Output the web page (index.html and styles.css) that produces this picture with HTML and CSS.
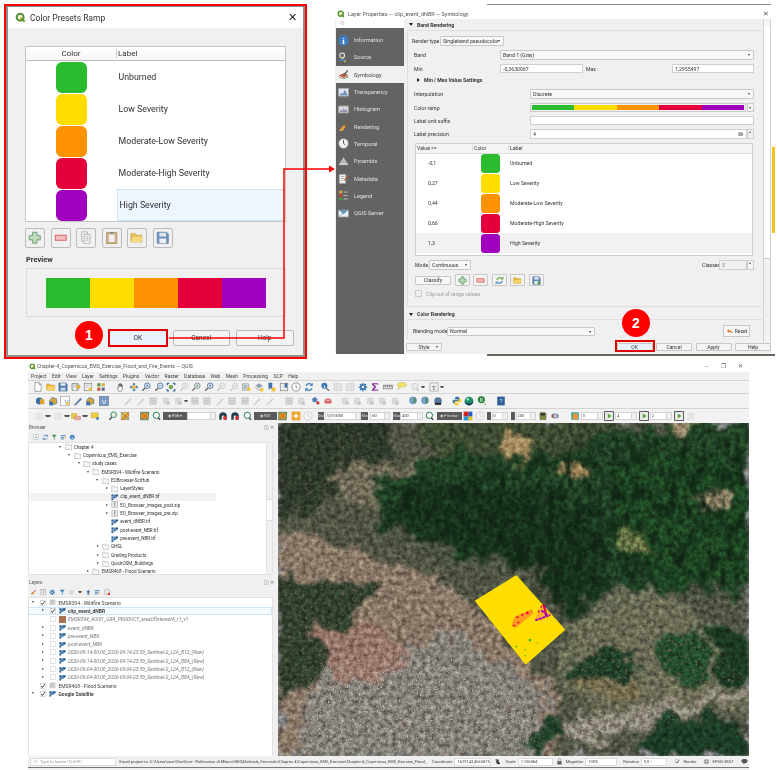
FILE: index.html
```html
<!DOCTYPE html>
<html lang="en">
<head>
<meta charset="utf-8">
<title>QGIS Color Presets Ramp</title>
<link rel="stylesheet" href="styles.css">
</head>
<body>
<svg class="defs" width="0" height="0" aria-hidden="true">
  <defs>
    <symbol id="q" viewBox="0 0 16 16"><circle cx="7.5" cy="7.5" r="5" fill="none" stroke="#589632" stroke-width="3"/><path d="M9 9l5 5" stroke="#589632" stroke-width="3"/><circle cx="8.5" cy="8.5" r="1.6" fill="#eeb422"/></symbol>
    <symbol id="doc" viewBox="0 0 16 16"><path d="M3 1h7l3 3v11H3z" fill="#fff" stroke="#777"/><path d="M10 1v3h3" fill="none" stroke="#777"/></symbol>
    <symbol id="fold" viewBox="0 0 16 16"><path d="M1 13V3h5l2 2h6v8z" fill="#e8b93c" stroke="#b78a1e" stroke-width=".7"/><path d="M1 13l2-6h12l-2 6z" fill="#f6d66a"/></symbol>
    <symbol id="save" viewBox="0 0 16 16"><path d="M1.5 1.5h11l2 2v11h-13z" fill="#4f7fb8" stroke="#3a5f8e"/><rect x="4" y="2" width="8" height="4" fill="#e8eef6"/><rect x="4" y="9" width="8" height="5" fill="#c7d4e4"/></symbol>
    <symbol id="saveas" viewBox="0 0 16 16"><path d="M1.5 2.5h10v11h-10z" fill="#cfd6dd" stroke="#777"/><path d="M9 5h5v5H9z" fill="#eec33a" stroke="#a8841c" stroke-width=".7"/><rect x="4" y="9" width="4" height="4" fill="#fff"/></symbol>
    <symbol id="print" viewBox="0 0 16 16"><rect x="2" y="2" width="12" height="12" fill="#f4f4f4" stroke="#777"/><path d="M4 5h8M4 8h5" stroke="#9ab" /><path d="M9 9h5v5H9z" fill="#eec33a"/></symbol>
    <symbol id="lay" viewBox="0 0 16 16"><rect x="2" y="2" width="5" height="5" fill="#5d8f3e"/><rect x="9" y="2" width="5" height="5" fill="#d2b23a"/><rect x="2" y="9" width="5" height="5" fill="#c85a3a"/><rect x="9" y="9" width="5" height="5" fill="#5a6e96"/></symbol>
    <symbol id="hand" viewBox="0 0 16 16"><path d="M4 8V4.5c0-1 1.5-1 1.5 0V7 3c0-1 1.6-1 1.6 0v4-3.500c0-1 1.600-1 1.600 0V8 5c0-1 1.500-1 1.500 0v6c0 2-1.500 4-4 4S3 13 2 10c-.4-1.200 1-1.500 2-.5z" fill="#fff" stroke="#444" stroke-width=".9"/></symbol>
    <symbol id="pan" viewBox="0 0 16 16"><path d="M8 1l3 3H9v3h3V5l3 3-3 3V9H9v3h2l-3 3-3-3h2V9H4v2L1 8l3-3v2h3V4H5z" fill="#4b7bb0"/><circle cx="8" cy="8" r="3" fill="#e8c33a"/></symbol>
    <symbol id="zin" viewBox="0 0 16 16"><circle cx="10" cy="6" r="4.500" fill="#dfe9f4" stroke="#4d6f93" stroke-width="1.400"/><path d="M6.500 9.500L2 14" stroke="#666" stroke-width="2.200"/><path d="M8 6h4M10 4v4" stroke="#3d6ea5"/></symbol>
    <symbol id="zout" viewBox="0 0 16 16"><circle cx="10" cy="6" r="4.500" fill="#dfe9f4" stroke="#4d6f93" stroke-width="1.400"/><path d="M6.500 9.500L2 14" stroke="#666" stroke-width="2.200"/><path d="M8 6h4" stroke="#3d6ea5"/></symbol>
    <symbol id="zfull" viewBox="0 0 16 16"><path d="M1 1h4v2H3v2H1zM15 1h-4v2h2v2h2zM1 15h4v-2H3v-2H1zM15 15h-4v-2h2v-2h2z" fill="#3d6ea5"/><rect x="5" y="5" width="6" height="6" fill="#7aa04a"/></symbol>
    <symbol id="zlay" viewBox="0 0 16 16"><circle cx="10" cy="6" r="4.500" fill="#e9eef3" stroke="#6a8098" stroke-width="1.300"/><path d="M6.500 9.500L2 14" stroke="#777" stroke-width="2"/><rect x="8.500" y="4.500" width="3" height="3" fill="#7aa04a"/></symbol>
    <symbol id="newm" viewBox="0 0 16 16"><rect x="2" y="3" width="10" height="10" fill="#dfe3e6" stroke="#888"/><rect x="4" y="5" width="6" height="6" fill="#aab9c4"/><rect x="10" y="9" width="5" height="5" fill="#efc332"/></symbol>
    <symbol id="tile" viewBox="0 0 16 16"><path d="M8 2l6 4-6 4-6-4z" fill="#8da3b8"/><path d="M2 9l6 4 6-4" fill="none" stroke="#888"/><rect x="10" y="10" width="5" height="5" fill="#efc332"/></symbol>
    <symbol id="bmk" viewBox="0 0 16 16"><path d="M4 1h6v11l-3-2.500L4 12z" fill="#3e6fa8"/><rect x="9" y="9" width="6" height="6" fill="#efc332"/></symbol>
    <symbol id="bms" viewBox="0 0 16 16"><rect x="2" y="2" width="12" height="12" fill="#eee" stroke="#777"/><path d="M9 2h4v8l-2-1.500L9 10z" fill="#3e6fa8"/></symbol>
    <symbol id="clock" viewBox="0 0 16 16"><circle cx="8" cy="8" r="6.500" fill="#fff" stroke="#777" stroke-width="1.200"/><path d="M8 4v4l3 2" fill="none" stroke="#555"/></symbol>
    <symbol id="ref" viewBox="0 0 16 16"><path d="M13 5A6 6 0 0 0 3 6M3 11a6 6 0 0 0 10-1" fill="none" stroke="#3a79b8" stroke-width="2"/><path d="M14 1v5H9zM2 15v-5h5z" fill="#3a79b8"/></symbol>
    <symbol id="iden" viewBox="0 0 16 16"><circle cx="7" cy="6" r="4.800" fill="#3e77b5"/><text x="7" y="9" font-size="8" font-family="Liberation Serif" font-weight="700" fill="#fff" text-anchor="middle">i</text><path d="M10 10l5 4" stroke="#666" stroke-width="2"/></symbol>
    <symbol id="tbl" viewBox="0 0 16 16"><rect x="2" y="3" width="12" height="10" fill="#f6f6f6" stroke="#bbb"/><path d="M2 6h12M2 9h12M6 3v10M10 3v10" stroke="#ccc"/></symbol>
    <symbol id="gear" viewBox="0 0 16 16"><circle cx="8" cy="8" r="3.500" fill="none" stroke="#4179b8" stroke-width="3"/><path d="M8 1v3M8 12v3M1 8h3M12 8h3M3 3l2 2M11 11l2 2M13 3l-2 2M5 11l-2 2" stroke="#4179b8" stroke-width="2"/></symbol>
    <symbol id="sig" viewBox="0 0 16 16"><path d="M3 2h10v3l-1.500-1.500H6.500L10 8l-3.500 4.500H12L13 11v3H3v-1.500L7 8 3 3.500z" fill="#8a2a9c"/></symbol>
    <symbol id="meas" viewBox="0 0 16 16"><rect x="1" y="5" width="14" height="6" fill="#d8d8d8" stroke="#777"/><path d="M4 5v3M7 5v3M10 5v3M13 5v3" stroke="#555"/></symbol>
    <symbol id="tip" viewBox="0 0 16 16"><path d="M1 4c0-2 2-3 7-3s7 1 7 3-2 4-7 4H5l-3 4 1-4.500C2 7 1 6 1 4z" fill="#f4e56a" stroke="#b5a53e" stroke-width=".7"/></symbol>
    <symbol id="gry" viewBox="0 0 16 16"><circle cx="8" cy="7" r="5" fill="#ececec" stroke="#bbb"/><path d="M11 11l3 3" stroke="#bbb" stroke-width="2"/></symbol>
    <symbol id="tbox" viewBox="0 0 16 16"><rect x="1.500" y="1.500" width="13" height="13" fill="#eee" stroke="#999"/><text x="8" y="12" font-size="10" font-family="Liberation Serif" fill="#444" text-anchor="middle">T</text></symbol>
    <symbol id="addv" viewBox="0 0 16 16"><circle cx="7" cy="8" r="5.500" fill="#3d70aa"/><path d="M8 5h7v8H8z" fill="#e3a22e"/></symbol>
    <symbol id="addp" viewBox="0 0 16 16"><path d="M2 8l5-6 7 3v7l-6 2z" fill="#d8a632" stroke="#3d70aa"/><rect x="2" y="9" width="6" height="6" fill="#3d70aa"/></symbol>
    <symbol id="vbox" viewBox="0 0 16 16"><rect x="1" y="1" width="14" height="14" fill="#fff" stroke="#999"/><text x="7" y="12" font-size="10" font-family="Liberation Sans" fill="#4e6d91">V</text><rect x="10" y="10" width="4" height="4" fill="#efc332"/></symbol>
    <symbol id="pen" viewBox="0 0 16 16"><path d="M2 14L12 3l2 2L4 15z" fill="#5b8ab8" stroke="#3e5f80" stroke-width=".5"/><path d="M2 14l1-3 2 2z" fill="#e8a23c"/></symbol>
    <symbol id="vlay" viewBox="0 0 16 16"><rect x="1" y="1" width="14" height="14" fill="#7a9cc4" stroke="#4e6d91"/><text x="8" y="12" font-size="10" font-family="Liberation Sans" fill="#fff" text-anchor="middle">V</text></symbol>
    <symbol id="fad" viewBox="0 0 16 16"><rect x="3" y="3" width="10" height="10" fill="#d6d6d6" stroke="#bbb"/><path d="M5 8h6" stroke="#aaa"/></symbol>
    <symbol id="fad2" viewBox="0 0 16 16"><path d="M2 14L12 3l2 2L4 15z" fill="#d0d0d0"/></symbol>
    <symbol id="fad3" viewBox="0 0 16 16"><path d="M3 4l5-2 5 2v8l-5 2-5-2z" fill="#d8d8d8"/><rect x="9" y="9" width="5" height="5" fill="#c6c6c6"/></symbol>
    <symbol id="blred" viewBox="0 0 16 16"><circle cx="6" cy="6" r="4" fill="#4d7fb6"/><circle cx="11" cy="11" r="2.500" fill="#d12e2e"/></symbol>
    <symbol id="redb" viewBox="0 0 16 16"><path d="M2 9c0-3 3-5 6-5s6 2 6 5-3 3-6 3-6 0-6-3z" fill="#e06464"/><path d="M5 7h6" stroke="#fff"/></symbol>
    <symbol id="idg" viewBox="0 0 16 16"><circle cx="8" cy="7" r="5.500" fill="#79a5d0" stroke="#4d78a6"/><rect x="9" y="3" width="3" height="8" fill="#4f8a4a"/></symbol>
    <symbol id="idk" viewBox="0 0 16 16"><circle cx="8" cy="8" r="6" fill="#59789a"/><path d="M3 11h10v3H3z" fill="#222"/></symbol>
    <symbol id="py" viewBox="0 0 16 16"><path d="M8 1c-3 0-3 1-3 3v1h5v1H3C1 6 1 8 1 9s1 3 2 3h2v-2c0-1 1-2 2-2h3c1 0 2-1 2-2V3c0-1-1-2-4-2z" fill="#3a75a8"/><path d="M8 15c3 0 3-1 3-3v-1H6v-1h7c2 0 2-2 2-3s-1-3-2-3h-2v2c0 1-1 2-2 2H6c-1 0-2 1-2 2v3c0 1 1 2 4 2z" fill="#f0cd3e"/></symbol>
    <symbol id="glob" viewBox="0 0 16 16"><circle cx="8" cy="8" r="7" fill="#1f8f68"/><path d="M1 8a7 7 0 0 0 14 0c-2 3-4 4-7 4S3 11 1 8z" fill="#123f5e"/><circle cx="6" cy="5" r="2" fill="#a8e0d0"/></symbol>
    <symbol id="grn" viewBox="0 0 16 16"><circle cx="7" cy="6" r="5.500" fill="#1c7d2e"/><text x="7" y="9" font-size="8" font-family="Liberation Sans" font-weight="700" fill="#fff" text-anchor="middle">0</text><circle cx="13" cy="13" r="1.600" fill="#aaa"/></symbol>
    <symbol id="book" viewBox="0 0 16 16"><rect x="2" y="1" width="12" height="14" fill="#2f5f94"/><text x="8" y="11" font-size="9" font-family="Liberation Sans" fill="#cfe0f2" text-anchor="middle">?</text></symbol>
    <symbol id="gzm" viewBox="0 0 16 16"><circle cx="9" cy="6" r="4.500" fill="#e9f5e2" stroke="#2d8a5a" stroke-width="1.600"/><path d="M6 10l-4 4" stroke="#444" stroke-width="2"/></symbol>
    <symbol id="stk" viewBox="0 0 16 16"><rect x="2" y="2" width="12" height="12" fill="#e6c93a" stroke="#8a8a8a"/><path d="M2 14L14 2M6 14l8-8" stroke="#c33" stroke-width="1.300"/><path d="M2 2l12 12" stroke="#2c6fb0"/></symbol>
    <symbol id="ybox" viewBox="0 0 16 16"><path d="M1 4h8v8H1z" fill="#f0ce42" stroke="#bb9a1c" stroke-width=".7"/><path d="M6 8h9v6H6z" fill="#e9b0a0" stroke="#c66" stroke-width=".7"/></symbol>
    <symbol id="ybx2" viewBox="0 0 16 16"><path d="M2 3h11v8H2z" fill="#f0ce42" stroke="#bb9a1c" stroke-width=".7"/><rect x="10" y="10" width="4" height="4" fill="#3d78b5"/></symbol>
    <symbol id="scp1" viewBox="0 0 16 16"><path d="M2 2h12v12H2z" fill="#3aa7a0"/><path d="M5 4h7l1 9H4z" fill="#f0943c"/></symbol>
    <symbol id="scp2" viewBox="0 0 16 16"><rect x="1" y="1" width="14" height="14" fill="#eeeeee" stroke="#333" stroke-width="1.300"/><path d="M6 4l6 4-6 4z" fill="#5aa02c"/></symbol>
    <symbol id="cube" viewBox="0 0 16 16"><path d="M4 2h7l2 2v10H3V3z" fill="#7b8a3e" stroke="#666" stroke-width=".6"/><rect x="4" y="4" width="7" height="3" fill="#222"/></symbol>
    <symbol id="prev" viewBox="0 0 16 16"><path d="M1 1h8v8H1z" fill="#d12222"/><path d="M9 1h6v8H9z" fill="#1f5fc2"/><path d="M1 9h8v6H1z" fill="#1e9ad8"/><path d="M9 9h6v6H9z" fill="#eec21f"/></symbol>
    <symbol id="bar3" viewBox="0 0 16 16"><path d="M2 8c0-3 3-4 6-4s6 1 6 4-3 4-6 4-6-1-6-4z" fill="#7a91aa"/><rect x="3" y="6" width="3" height="4" fill="#d44"/><rect x="7" y="6" width="3" height="4" fill="#eee"/></symbol>
    <symbol id="orb" viewBox="0 0 16 16"><path d="M1 2h13l-1 12L1 14z" fill="#e39a2b" stroke="#1a7f6c" stroke-width="1.200"/><path d="M3 3l9 10M12 3L3 13" stroke="#b0492a" stroke-width="1.200"/></symbol>
    <symbol id="oplus" viewBox="0 0 16 16"><rect x="1" y="1" width="14" height="14" fill="#efa32a"/><path d="M8 4v8M4 8h8" stroke="#fff" stroke-width="2.200"/></symbol>
    <symbol id="rzm" viewBox="0 0 16 16"><path d="M8 2a6 6 0 0 0-6 6v6h4V9a2 2 0 0 1 4 0v5h4V8a6 6 0 0 0-6-6z" fill="#24404e"/><circle cx="11" cy="11" r="3" fill="#d33"/></symbol>
    <symbol id="gst" viewBox="0 0 16 16"><circle cx="7" cy="7" r="5" fill="#fff" stroke="#1b7a4a" stroke-width="1.600"/><path d="M10 11l3 3" stroke="#333" stroke-width="2"/></symbol>
    <symbol id="tfold" viewBox="0 0 16 16"><path d="M1.500 14V2.500h5l1 2h7V14z" fill="#f7f7f7" stroke="#9a9a9a"/></symbol>
    <symbol id="zip" viewBox="0 0 16 16"><rect x="2" y="1" width="12" height="14" fill="#eee" stroke="#8c8c8c"/><path d="M8 2v11" stroke="#555" stroke-width="2" stroke-dasharray="1.500 1"/></symbol>
    <symbol id="rast" viewBox="0 0 16 16"><path d="M1 3h4v4H1zM9 3h6v4H9zM5 7h4v4H5zM11 7h2v2h-2zM1 11h4v4H1z" fill="#1d5284"/><path d="M5 3h4v4H5zM1 7h4v4H1zM9 7h2v4H9z" fill="#5e92c1"/></symbol>
    <symbol id="grp" viewBox="0 0 16 16"><path d="M2 4l3-2v10l-3 2zM6 3l3-2v10l-3 2zM10 2h4v11h-4z" fill="#e2e2e2" stroke="#888" stroke-width=".7"/></symbol>
    <symbol id="chk" viewBox="0 0 16 16"><rect x=".8" y=".8" width="14.400" height="14.400" fill="#fff" stroke="#9a9a9a"/><path d="M3.500 8l3 4 6-9" fill="none" stroke="#111" stroke-width="2"/></symbol>
    <symbol id="uck" viewBox="0 0 16 16"><rect x=".8" y=".8" width="14.400" height="14.400" fill="#fff" stroke="#b5b5b5"/></symbol>
    <symbol id="plus" viewBox="0 0 16 16"><path d="M5.500 1.500h5v4h4v5h-4v4h-5v-4h-4v-5h4z" fill="#bcd9b6" stroke="#4f8a56" stroke-width="1.100"/></symbol>
    <symbol id="minus" viewBox="0 0 16 16"><rect x="1.500" y="5" width="13" height="6" fill="#f3b5b5" stroke="#d44848" stroke-width="1.100"/></symbol>
    <symbol id="copy" viewBox="0 0 16 16"><path d="M3 1h7v11H3z" fill="#efefef" stroke="#a8a8a8"/><path d="M6 4h7v11H6z" fill="#f5f5f5" stroke="#a0a0a0"/><path d="M8 7h3M8 9h3M8 11h3" stroke="#aaa"/></symbol>
    <symbol id="paste" viewBox="0 0 16 16"><rect x="2" y="2" width="12" height="13" fill="#c7a878" stroke="#9c7c4c"/><rect x="4.500" y="4" width="7" height="9" fill="#eee"/><rect x="6" y="1" width="4" height="2.500" fill="#777"/></symbol>
    <symbol id="fsave" viewBox="0 0 16 16"><path d="M1.500 1.500h11l2 2v11h-13z" fill="#5e86b5" stroke="#3f6592"/><rect x="4" y="2" width="8" height="4.500" fill="#dce5ef"/><rect x="4" y="9" width="8" height="5.500" fill="#eef1f5"/></symbol>
    <symbol id="rfsh" viewBox="0 0 16 16"><path d="M13 5A6 6 0 0 0 3 7" fill="none" stroke="#6fa34f" stroke-width="2.200"/><path d="M3 11a6 6 0 0 0 10-2" fill="none" stroke="#4b8abd" stroke-width="2.200"/><path d="M15 1v5h-5z" fill="#6fa34f"/><path d="M1 15v-5h5z" fill="#4b8abd"/></symbol>
    <symbol id="sv2" viewBox="0 0 16 16"><use href="#fsave"/><circle cx="12.500" cy="12.500" r="3" fill="#5aa453"/></symbol>
    <symbol id="rback" viewBox="0 0 16 16"><path d="M2 6l5-4v3c5 0 8 2 8 9-2-4-4-5-8-5v3z" fill="#e2802f"/></symbol>
    <symbol id="s-info" viewBox="0 0 16 16"><circle cx="8" cy="8" r="7.500" fill="#3f7cc0"/><text x="8" y="13" font-size="13" font-family="Liberation Serif" font-weight="700" fill="#fff" text-anchor="middle">i</text></symbol>
    <symbol id="s-src" viewBox="0 0 16 16"><circle cx="6" cy="5" r="3.500" fill="none" stroke="#e8e8e8" stroke-width="1.600"/><path d="M6 9l5 5" stroke="#e9c23c" stroke-width="3"/><rect x="2" y="10" width="8" height="3" fill="#4d7fb6"/></symbol>
    <symbol id="s-sym" viewBox="0 0 16 16"><path d="M1 9l8-3 6 3-7 4z" fill="#c95c4a"/><path d="M1 11l7 3 7-4v2l-7 3-7-3z" fill="#5c8a3f"/><path d="M7 8l7-7 1 1-6 8z" fill="#666"/></symbol>
    <symbol id="s-tra" viewBox="0 0 16 16"><rect x="1" y="2" width="14" height="11" fill="#dfe8f2" stroke="#aab"/><path d="M2 12l3-4 2 2 3-6 4 8z" fill="#6f8fbc"/><rect x="1" y="13" width="14" height="2" fill="#888"/></symbol>
    <symbol id="s-his" viewBox="0 0 16 16"><rect x="1" y="3" width="14" height="10" fill="#d8d8d8" stroke="#aaa"/><path d="M2 12l2-4 2 2 2-4 2 3 2-2 2 5z" fill="#8c98a8"/></symbol>
    <symbol id="s-ren" viewBox="0 0 16 16"><path d="M9 6l5-5 1 1-4 6z" fill="#8a5a2a"/><path d="M9 6l2 2-3 5c-2 2-5 2-7 1 2-1 3-3 4-5z" fill="#e8a33a"/></symbol>
    <symbol id="s-tmp" viewBox="0 0 16 16"><circle cx="8" cy="8" r="7" fill="#f4f4f4" stroke="#999"/><path d="M8 3v5l3 2" fill="none" stroke="#555" stroke-width="1.400"/></symbol>
    <symbol id="s-pyr" viewBox="0 0 16 16"><path d="M8 2L1 13h14z" fill="#d4d4d4" stroke="#aaa" stroke-width=".6"/><path d="M4 9h8M6 6h4" stroke="#888"/></symbol>
    <symbol id="s-met" viewBox="0 0 16 16"><path d="M2 2h9v13H2z" fill="#f4f4f4" stroke="#aaa"/><path d="M4 5h5M4 8h5M4 11h3" stroke="#888"/><path d="M8 11l6-8 1 1-6 8z" fill="#d95f30"/></symbol>
    <symbol id="s-leg" viewBox="0 0 16 16"><rect x="2" y="1" width="4" height="4" fill="#e0b22c"/><rect x="2" y="6" width="4" height="4" fill="#c83a2c"/><rect x="2" y="11" width="4" height="4" fill="#4d9c3a"/><path d="M8 3h6M8 8h6M8 13h6" stroke="#ccc" stroke-width="1.200"/></symbol>
    <symbol id="s-srv" viewBox="0 0 16 16"><rect x="1" y="3" width="14" height="10" fill="#ecf1f6" stroke="#aab"/><path d="M1 3l7 6 7-6" fill="#6c93c0"/><path d="M2 12l5-4" stroke="#6c93c0"/></symbol>
    <symbol id="eye" viewBox="0 0 16 16"><path d="M1 3h10l4 5-4 5H1z" fill="#999"/><path d="M5 6l4 4M9 6l-4 4" stroke="#eee"/></symbol>
    <symbol id="lck" viewBox="0 0 16 16"><path d="M5 7V4a3 3 0 0 1 6 0v3" fill="none" stroke="#888" stroke-width="1.500"/><rect x="3" y="7" width="10" height="8" fill="#666"/></symbol>
    <symbol id="epsg" viewBox="0 0 16 16"><circle cx="8" cy="8" r="6" fill="#999"/><path d="M2 8h12M8 2v12" stroke="#eee"/></symbol>
    <symbol id="bub" viewBox="0 0 16 16"><path d="M1 7c0-4 3-5 7-5s7 1 7 5-3 5-6 5l-3 3v-3.500C3 11 1 10 1 7z" fill="#555"/></symbol>
    <symbol id="mico" viewBox="0 0 16 16"><path d="M5 2l6 2v10l-6-2z" fill="#444"/><circle cx="5" cy="4" r="2" fill="#777"/><circle cx="11" cy="12" r="2.500" fill="#222"/></symbol>
    <symbol id="b-add" viewBox="0 0 16 16"><rect x="2" y="2" width="12" height="12" fill="#fafafa" stroke="#8a9"/><path d="M8 5v6M5 8h6" stroke="#4b8f4b"/></symbol>
    <symbol id="b-ref" viewBox="0 0 16 16"><use href="#ref"/></symbol>
    <symbol id="b-fil" viewBox="0 0 16 16"><path d="M2 2h12L9 8v6l-2-1V8z" fill="#4c8c5a"/></symbol>
    <symbol id="b-col" viewBox="0 0 16 16"><path d="M2 4h12M2 8h8M2 12h8" stroke="#3e7ab3" stroke-width="2"/><path d="M11 7h4l-2 5z" fill="#e9a032"/></symbol>
    <symbol id="b-inf" viewBox="0 0 16 16"><circle cx="8" cy="8" r="6" fill="#3c82c4"/><path d="M8 7v5" stroke="#fff" stroke-width="2"/></symbol>
    <symbol id="l-sty" viewBox="0 0 16 16"><path d="M2 12c4 2 7 0 8-3L8 6c-3 1-3 4-6 6z" fill="#d47e20"/><path d="M9 7l5-5 1 1-5 5z" fill="#a33"/></symbol>
    <symbol id="l-fil" viewBox="0 0 16 16"><path d="M2 2h12L9 8v6l-2-1V8z" fill="#3c7fb0"/></symbol>
    <symbol id="l-up" viewBox="0 0 16 16"><path d="M8 2l5 6h-3v6H6V8H3z" fill="#3b78b0"/></symbol>
    <symbol id="l-red" viewBox="0 0 16 16"><rect x="2" y="2" width="12" height="11" fill="#eee" stroke="#888"/><circle cx="12" cy="12" r="3" fill="#d33"/></symbol>
  </defs>
</svg>

<!-- pieces of the screen that peek out behind the cropped windows -->
<div class="peek peek-top"></div>
<div class="peek peek-bottom"></div>
<div class="peek peek-strip"></div>

<!-- Color Presets Ramp dialog -->
<section class="win dlg">
  <div class="dlg-in">
    <header class="dlg-title">
      <svg class="dlg-logo"><use href="#q"/></svg>
      <span class="dlg-name">Color Presets Ramp</span>
      <span class="dlg-x">✕</span>
    </header>
    <div class="dlg-table">
      <div class="dlg-head">
        <span class="dh-color">Color</span>
        <span class="dh-label">Label</span>
      </div>
      <div class="dlg-row"><span class="swatch s-green"></span><span class="dlg-text">Unburned</span></div>
      <div class="dlg-row"><span class="swatch s-yellow"></span><span class="dlg-text">Low Severity</span></div>
      <div class="dlg-row"><span class="swatch s-orange"></span><span class="dlg-text">Moderate-Low Severity</span></div>
      <div class="dlg-row"><span class="swatch s-red"></span><span class="dlg-text">Moderate-High Severity</span></div>
      <div class="dlg-row"><span class="swatch s-purple"></span><span class="dlg-text dlg-sel">High Severity</span></div>
    </div>
    <div class="dlg-tools">
      <button class="tbtn"><svg><use href="#plus"/></svg></button>
      <button class="tbtn"><svg><use href="#minus"/></svg></button>
      <button class="tbtn"><svg><use href="#copy"/></svg></button>
      <button class="tbtn"><svg><use href="#paste"/></svg></button>
      <button class="tbtn"><svg><use href="#fold"/></svg></button>
      <button class="tbtn"><svg><use href="#fsave"/></svg></button>
    </div>
    <div class="dlg-prev-t">Preview</div>
    <div class="dlg-prev">
      <div class="ramp ramp-big"><i class="s-green"></i><i class="s-yellow"></i><i class="s-orange"></i><i class="s-red"></i><i class="s-purple"></i></div>
    </div>
    <div class="dlg-btns">
      <button class="dbtn dbtn-ok">OK</button>
      <button class="dbtn">Cancel</button>
      <button class="dbtn">Help</button>
    </div>
  </div>
</section>

<!-- Layer Properties window -->
<section class="win lp">
  <header class="lp-title">
    <svg class="lp-logo"><use href="#q"/></svg>
    <span>Layer Properties — clip_event_dNBR — Symbology</span>
    <span class="lp-x">✕</span>
  </header>
  <div class="lp-body">
    <nav class="lp-side">
      <div class="lp-search"><svg class="lp-mag"><use href="#gry"/></svg></div>
      <div class="lp-list">
        <div class="lp-item"><svg><use href="#s-info"/></svg>Information</div>
        <div class="lp-item"><svg><use href="#s-src"/></svg>Source</div>
        <div class="lp-item lp-on"><svg><use href="#s-sym"/></svg>Symbology</div>
        <div class="lp-item"><svg><use href="#s-tra"/></svg>Transparency</div>
        <div class="lp-item"><svg><use href="#s-his"/></svg>Histogram</div>
        <div class="lp-item"><svg><use href="#s-ren"/></svg>Rendering</div>
        <div class="lp-item"><svg><use href="#s-tmp"/></svg>Temporal</div>
        <div class="lp-item"><svg><use href="#s-pyr"/></svg>Pyramids</div>
        <div class="lp-item"><svg><use href="#s-met"/></svg>Metadata</div>
        <div class="lp-item"><svg><use href="#s-leg"/></svg>Legend</div>
        <div class="lp-item"><svg><use href="#s-srv"/></svg>QGIS Server</div>
      </div>
    </nav>
    <div class="lp-main">
      <div class="lp-scroll">
        <div class="lp-content">
          <div class="gh"><i class="tri"></i>Band Rendering</div>
          <div class="frame">
            <div class="row"><label class="lab-rt">Render type</label><span class="combo combo-rt">Singleband pseudocolor</span></div>
            <div class="row"><label class="lab-a">Band</label><span class="combo grow">Band 1 (Gray)</span></div>
            <div class="row row9"><label class="lab-a">Min</label><span class="field f-min">-0,3630067</span><label class="lab-m">Max</label><span class="field f-max">1,2955497</span></div>
            <div class="row row8"><i class="tri-r"></i><b class="mm">Min / Max Value Settings</b></div>
            <div class="row row-5"><label class="lab-b">Interpolation</label><span class="combo grow">Discrete</span></div>
            <div class="row row9"><label class="lab-b">Color ramp</label><div class="ramp ramp-lp"><i class="s-green"></i><i class="s-yellow"></i><i class="s-orange"></i><i class="s-red"></i><i class="s-purple"></i></div><span class="rdrop"></span></div>
            <div class="row row9"><label class="lab-b">Label unit suffix</label><span class="field grow"></span></div>
            <div class="row"><label class="lab-b">Label precision</label><span class="field grow">4<svg class="clr"><use href="#eye"/></svg></span><span class="spin"></span></div>
            <div class="ltable">
              <div class="lhead"><span class="c1">Value &lt;=</span><span class="c2">Color</span><span class="c3">Label</span></div>
              <div class="lrow"><span class="c1 v">-0,1</span><span class="c2"><span class="lsw s-green"></span></span><span class="c3">Unburned</span></div>
              <div class="lrow"><span class="c1 v">0,27</span><span class="c2"><span class="lsw s-yellow"></span></span><span class="c3">Low Severity</span></div>
              <div class="lrow"><span class="c1 v">0,44</span><span class="c2"><span class="lsw s-orange"></span></span><span class="c3">Moderate-Low Severity</span></div>
              <div class="lrow"><span class="c1 v">0,66</span><span class="c2"><span class="lsw s-red"></span></span><span class="c3">Moderate-High Severity</span></div>
              <div class="lrow lrow-on"><span class="c1 v">1,3</span><span class="c2"><span class="lsw s-purple"></span></span><span class="c3">High Severity</span></div>
            </div>
            <div class="row row-mode"><label class="lab-mode">Mode</label><span class="combo combo-mode">Continuous</span><span class="grow"></span><label class="lab-cls">Classes</label><span class="field f-cls">5</span><span class="spin"></span></div>
            <div class="row row-cl"><button class="cbtn">Classify</button><span class="ib"><svg><use href="#plus"/></svg></span><span class="ib"><svg><use href="#minus"/></svg></span><span class="ib"><svg><use href="#rfsh"/></svg></span><span class="ib"><svg><use href="#fold"/></svg></span><span class="ib"><svg><use href="#sv2"/></svg></span></div>
            <div class="row row-clip"><span class="fake-chk"></span><span class="dim">Clip out of range values</span></div>
          </div>
          <div class="gh gh2"><i class="tri"></i>Color Rendering</div>
          <div class="frame frame2">
            <label class="lab-bm">Blending mode</label><span class="combo combo-bm">Normal</span><span class="grow"></span><button class="rst"><svg><use href="#rback"/></svg>Reset</button>
          </div>
        </div>
        <div class="lp-sb"><span class="up"></span><span class="thumb"></span><span class="dn"></span></div>
      </div>
      <div class="lp-foot">
        <button class="fb fb-style">Style <i></i></button>
        <span class="grow"></span>
        <button class="fb fb-ok">OK</button>
        <button class="fb">Cancel</button>
        <button class="fb">Apply</button>
        <button class="fb">Help</button>
      </div>
    </div>
  </div>
</section>

<!-- QGIS main window -->
<section class="win qg">
  <header class="qg-title">
    <svg class="qg-logo"><use href="#q"/></svg>
    <span>Chapter-4_Copernicus_EMS_Exercise_Flood_and_Fire_Events — QGIS</span>
    <span class="grow"></span>
    <span class="ctl">–</span><span class="ctl">❐</span><span class="ctl">✕</span>
  </header>
  <nav class="qg-menu">
    <span>Project</span><span>Edit</span><span>View</span><span>Layer</span><span>Settings</span><span>Plugins</span><span>Vector</span><span>Raster</span><span>Database</span><span>Web</span><span>Mesh</span><span>Processing</span><span>SCP</span><span>Help</span>
  </nav>
  <div class="tb tb1">
    <svg><use href="#doc"/></svg><svg><use href="#fold"/></svg><svg><use href="#save"/></svg><svg><use href="#saveas"/></svg><svg><use href="#print"/></svg><svg><use href="#lay"/></svg>
    <b class="s8"></b>
    <svg><use href="#hand"/></svg><svg><use href="#pan"/></svg><svg><use href="#zin"/></svg><svg><use href="#zout"/></svg><svg><use href="#zfull"/></svg><svg class="fd"><use href="#zlay"/></svg><svg><use href="#zlay"/></svg><svg><use href="#zin"/></svg><svg class="fd"><use href="#zlay"/></svg><svg class="fd"><use href="#zlay"/></svg><svg><use href="#newm"/></svg><svg><use href="#tile"/></svg><svg><use href="#bmk"/></svg><svg><use href="#bms"/></svg><svg><use href="#clock"/></svg><svg><use href="#ref"/></svg>
    <b class="s4"></b>
    <svg><use href="#iden"/></svg><svg><use href="#tbl"/></svg><svg><use href="#tbl"/></svg><svg><use href="#gear"/></svg><svg><use href="#sig"/></svg><svg><use href="#meas"/></svg>
    <b class="s2"></b>
    <svg><use href="#tip"/></svg><svg><use href="#gry"/></svg><b class="car"></b><b class="s3"></b><svg><use href="#tbox"/></svg><b class="car"></b>
  </div>
  <div class="tb tb2">
    <svg><use href="#addv"/></svg><svg><use href="#addp"/></svg><svg><use href="#vbox"/></svg><svg><use href="#pen"/></svg><svg><use href="#addp"/></svg>
    <b class="s1"></b><svg><use href="#vlay"/></svg><b class="s11"></b>
    <svg><use href="#fad2"/></svg><svg><use href="#fad2"/></svg><svg><use href="#fad"/></svg><svg><use href="#fad3"/></svg><svg><use href="#fad3"/></svg><b class="car"></b><svg><use href="#fad"/></svg><svg><use href="#fad"/></svg><svg><use href="#fad2"/></svg><svg><use href="#fad"/></svg><svg><use href="#fad"/></svg><svg><use href="#fad2"/></svg><svg><use href="#fad2"/></svg>
    <b class="s6"></b><svg><use href="#fad"/></svg><svg><use href="#fad3"/></svg><b class="s2"></b>
    <svg><use href="#blred"/></svg><svg><use href="#redb"/></svg><b class="s4"></b>
    <svg><use href="#fad3"/></svg><svg><use href="#fad3"/></svg><svg><use href="#fad3"/></svg><svg><use href="#fad3"/></svg><svg><use href="#fad3"/></svg>
    <b class="s5"></b><svg><use href="#idg"/></svg><svg><use href="#idg"/></svg><svg><use href="#idk"/></svg>
    <b class="s6"></b><svg><use href="#py"/></svg><svg><use href="#glob"/></svg><svg><use href="#grn"/></svg>
    <b class="s6"></b><svg><use href="#book"/></svg>
  </div>
  <div class="tb tb3">
    <svg class="fd"><use href="#fad"/></svg><b class="car c6"></b><svg class="fd"><use href="#fad"/></svg><b class="car c6"></b><svg><use href="#ybox"/></svg><b class="car c6"></b><svg><use href="#ybx2"/></svg>
    <b class="s5"></b><svg><use href="#gzm"/></svg><svg><use href="#stk"/></svg><b class="s7"></b>
    <svg><use href="#orb"/></svg><svg><use href="#gst"/></svg>
    <span class="dk w24">◉ RGB ▾</span><span class="inp w29"></span>
    <svg><use href="#rzm"/></svg><svg><use href="#rzm"/></svg><svg><use href="#gst"/></svg>
    <span class="dk w23">◉ ROI</span>
    <svg><use href="#orb"/></svg><svg><use href="#oplus"/></svg><svg class="fd"><use href="#clock"/></svg>
    <b class="s4"></b><span class="dk w6">Dist</span><span class="inp w36 m1">0,010000</span>
    <span class="dk w7">Min</span><span class="inp w20 m2">60</span>
    <span class="dk w7 m3">Max</span><span class="inp w23">400</span>
    <svg class="m2"><use href="#gst"/></svg>
    <span class="dk w25">◉ Preview</span>
    <svg><use href="#prev"/></svg><svg class="fd"><use href="#clock"/></svg>
    <span class="dk w4"></span><span class="inp w16 m1">0</span>
    <span class="dk w4 m3"></span><span class="inp w20 m1">200</span>
    <svg class="m2"><use href="#cube"/></svg><svg><use href="#bar3"/></svg><b class="s7"></b>
    <svg><use href="#scp1"/></svg><span class="inp w22">3</span>
    <svg><use href="#scp2"/></svg><span class="inp w22">4</span>
    <svg><use href="#scp2"/></svg><span class="inp w22">2</span>
    <svg class="m2"><use href="#scp2"/></svg><svg class="fd"><use href="#fad"/></svg>
  </div>
  <div class="qg-work">
    <aside class="qg-left">
      <div class="ph"><span>Browser</span><span class="ph-c">◫ ✕</span></div>
      <div class="pt">
        <svg><use href="#b-add"/></svg><svg><use href="#b-ref"/></svg><svg><use href="#b-fil"/></svg><svg><use href="#b-col"/></svg><svg><use href="#b-inf"/></svg>
      </div>
      <div class="tree tree-b">
        <div class="tr d0"><i class="ar dn"></i><svg><use href="#tfold"/></svg>Chapter 4</div>
        <div class="tr d1"><i class="ar dn"></i><svg><use href="#tfold"/></svg>Copernicus_EMS_Exercise</div>
        <div class="tr d2"><i class="ar dn"></i><svg><use href="#tfold"/></svg>study cases</div>
        <div class="tr d3"><i class="ar dn"></i><svg><use href="#tfold"/></svg>EMSR394 - Wildfire Scenario</div>
        <div class="tr d4"><i class="ar dn"></i><svg><use href="#tfold"/></svg>EOBrowser-SciHub</div>
        <div class="tr d5"><i class="ar rt"></i><svg><use href="#tfold"/></svg>LayerStyles</div>
        <div class="tr d5 tr-on"><i class="ar"></i><svg><use href="#rast"/></svg>clip_event_dNBR.tif</div>
        <div class="tr d5"><i class="ar rt"></i><svg><use href="#zip"/></svg>EO_Browser_images_post.zip</div>
        <div class="tr d5"><i class="ar rt"></i><svg><use href="#zip"/></svg>EO_Browser_images_pre.zip</div>
        <div class="tr d5"><i class="ar"></i><svg><use href="#rast"/></svg>event_dNBR.tif</div>
        <div class="tr d5"><i class="ar"></i><svg><use href="#rast"/></svg>post-event_NBR.tif</div>
        <div class="tr d5"><i class="ar"></i><svg><use href="#rast"/></svg>pre-event_NBR.tif</div>
        <div class="tr d4"><i class="ar rt"></i><svg><use href="#tfold"/></svg>GHSL</div>
        <div class="tr d4"><i class="ar rt"></i><svg><use href="#tfold"/></svg>Grading Products</div>
        <div class="tr d4"><i class="ar rt"></i><svg><use href="#tfold"/></svg>QuickOSM_Buildings</div>
        <div class="tr d3"><i class="ar rt"></i><svg><use href="#tfold"/></svg>EMSR468 - Flood Scenario</div>
        <div class="sb"><span class="thumb-b"></span></div>
      </div>
      <div class="ph ph2"><span>Layers</span><span class="ph-c">◫ ✕</span></div>
      <div class="pt pt2">
        <svg><use href="#l-sty"/></svg><svg><use href="#zip"/></svg><svg><use href="#gear"/></svg><svg><use href="#l-fil"/></svg><svg class="fd"><use href="#epsg"/></svg><b class="car"></b><svg><use href="#l-up"/></svg><svg><use href="#b-col"/></svg><svg><use href="#l-red"/></svg>
      </div>
      <div class="tree tree-l">
        <div class="ly"><i class="ar dn"></i><svg class="ck"><use href="#chk"/></svg><svg><use href="#grp"/></svg>EMSR394 - Wildfire Scenario</div>
        <div class="ly l2 ly-on"><i class="ar rt"></i><svg class="ck"><use href="#chk"/></svg><svg><use href="#rast"/></svg><strong>clip_event_dNBR</strong></div>
        <div class="ly l2 off"><i class="ar"></i><svg class="ck"><use href="#uck"/></svg><span class="brown"></span>EMSR394_AOI01_GRA_PRODUCT_areaOfInterestA_r1_v1</div>
        <div class="ly l2 off"><i class="ar rt"></i><svg class="ck"><use href="#uck"/></svg><svg><use href="#rast"/></svg>event_dNBR</div>
        <div class="ly l2 off"><i class="ar rt"></i><svg class="ck"><use href="#uck"/></svg><svg><use href="#rast"/></svg>pre-event_NBR</div>
        <div class="ly l2 off"><i class="ar rt"></i><svg class="ck"><use href="#uck"/></svg><svg><use href="#rast"/></svg>post-event_NBR</div>
        <div class="ly l2 off"><i class="ar rt"></i><svg class="ck"><use href="#uck"/></svg><svg><use href="#rast"/></svg>2020-09-14-00:00_2020-09-14-23:59_Sentinel-2_L2A_B12_(Raw)</div>
        <div class="ly l2 off"><i class="ar rt"></i><svg class="ck"><use href="#uck"/></svg><svg><use href="#rast"/></svg>2020-09-14-00:00_2020-09-14-23:59_Sentinel-2_L2A_B8A_(Raw)</div>
        <div class="ly l2 off"><i class="ar rt"></i><svg class="ck"><use href="#uck"/></svg><svg><use href="#rast"/></svg>2020-09-04-00:00_2020-09-04-23:59_Sentinel-2_L2A_B12_(Raw)</div>
        <div class="ly l2 off"><i class="ar rt"></i><svg class="ck"><use href="#uck"/></svg><svg><use href="#rast"/></svg>2020-09-04-00:00_2020-09-04-23:59_Sentinel-2_L2A_B8A_(Raw)</div>
        <div class="ly"><i class="ar"></i><svg class="ck"><use href="#chk"/></svg><svg><use href="#grp"/></svg>EMSR468 - Flood Scenario</div>
        <div class="ly"><i class="ar dn"></i><svg class="ck"><use href="#chk"/></svg><svg><use href="#rast"/></svg><strong>Google Satellite</strong></div>
      </div>
    </aside>
    <svg class="map" viewBox="0 12 1413 999" preserveAspectRatio="none" role="img" aria-label="Satellite map with the classified burn severity raster">
      <defs>
        <filter id="sat" x="0" y="0" width="100%" height="100%" color-interpolation-filters="sRGB">
          <feTurbulence type="fractalNoise" baseFrequency=".015" numOctaves="5" seed="7" result="n1"/>
          <feDisplacementMap in="SourceGraphic" in2="n1" scale="110" xChannelSelector="R" yChannelSelector="G" result="d"/>
          <feGaussianBlur in="d" stdDeviation="4" result="b"/>
          <feTurbulence type="fractalNoise" baseFrequency=".07" numOctaves="4" seed="12" result="n2"/>
          <feColorMatrix in="n2" type="matrix" values=".6 0 0 0 .2 .6 0 0 0 .2 .6 0 0 0 .2 0 0 0 0 1" result="g"/>
          <feBlend in="b" in2="g" mode="hard-light"/>
        </filter>
        <filter id="speck" x="0" y="0" width="100%" height="100%" color-interpolation-filters="sRGB">
          <feGaussianBlur in="SourceAlpha" stdDeviation="30" result="m"/>
          <feTurbulence type="fractalNoise" baseFrequency=".3" numOctaves="2" seed="4"/>
          <feColorMatrix type="matrix" values="0 0 0 0 .82 0 0 0 0 .8 0 0 0 0 .78 4 0 0 0 -2.350" result="s"/>
          <feGaussianBlur in="s" stdDeviation="1.600" result="s2"/>
          <feComposite in="s2" in2="m" operator="in"/>
        </filter>
        <filter id="speck2" x="0" y="0" width="100%" height="100%" color-interpolation-filters="sRGB">
          <feGaussianBlur in="SourceAlpha" stdDeviation="25" result="m"/>
          <feTurbulence type="fractalNoise" baseFrequency=".1" numOctaves="3" seed="21"/>
          <feColorMatrix type="matrix" values="0 0 0 0 .52 0 0 0 0 .44 0 0 0 0 .36 3.500 0 0 0 -1.950" result="s"/>
          <feComposite in="s" in2="m" operator="in"/>
        </filter>
        <filter id="ridge" x="0" y="0" width="100%" height="100%" color-interpolation-filters="sRGB">
          <feGaussianBlur in="SourceAlpha" stdDeviation="25" result="m"/>
          <feTurbulence type="fractalNoise" baseFrequency=".035 .02" numOctaves="5" seed="31"/>
          <feColorMatrix type="matrix" values="0 0 0 0 .06 0 0 0 0 .14 0 0 0 0 .08 3 0 0 0 -1.300" result="s"/>
          <feComposite in="s" in2="m" operator="in"/>
        </filter>
      </defs>
      <g filter="url(#sat)">
        <rect x="0" y="12" width="1413" height="999" fill="#4f5443"/>
        <polygon fill="#2c3829" points="0,0 320,0 340,130 210,210 0,300"/>
        <polygon fill="#6f6a57" points="150,150 320,130 430,120 350,250 220,260"/>
        <polygon fill="#3f4c33" points="420,0 1020,0 920,170 700,130 440,100"/>
        <polygon fill="#234427" points="300,190 530,90 800,110 1000,50 1413,0 1413,520 1200,520 1000,500 860,600 780,440 560,420 490,370 300,320"/>
        <polygon fill="#1a361e" points="300,320 400,210 560,180 780,240 1000,300 960,520 860,600 780,440 560,400"/>
        <polygon fill="#204824" points="1000,120 1300,100 1413,180 1413,480 1180,500 1020,420"/>
        <polygon fill="#a68c5f" points="680,50 770,60 750,140 690,110"/>
        <polygon fill="#a68c5f" points="840,130 920,130 900,170 840,170"/>
        <polygon fill="#9a8a6e" points="1165,0 1300,0 1220,60"/>
        <polygon fill="#9a8a6e" points="1265,215 1330,205 1345,270 1265,275"/>
        <polygon fill="#6f7a4a" points="1030,345 1110,330 1120,410 1050,400"/>
        <polygon fill="#8a7868" points="0,330 300,420 480,470 620,610 820,790 840,1010 0,1010"/>
        <polygon fill="#827e78" points="150,700 520,650 810,800 790,1010 40,1010"/>
        <polygon fill="#2f3e2c" points="0,480 300,500 210,620 110,800 0,810"/>
        <polygon fill="#96766a" points="100,620 300,620 400,720 200,800"/>
        <polygon fill="#686a54" points="860,620 1000,520 1130,500 1220,560 1300,640 1413,780 1413,870 1000,900 830,810"/>
        <polygon fill="#1d3d26" points="870,740 1050,690 1095,790 870,780"/>
        <polygon fill="#70694c" points="880,775 1090,780 1090,835 900,810"/>
        <polygon fill="#224a2a" points="1150,640 1280,650 1300,800 1150,770"/>
        <polygon fill="#1c3a22" points="1300,640 1413,650 1413,790 1330,800"/>
        <polygon fill="#8a8576" points="850,900 1100,860 1400,820 1413,850 1150,900 1000,960 850,985"/>
        <polygon fill="#1c3c26" points="1080,1010 1150,900 1300,890 1413,950 1413,1010"/>
        <polygon fill="#21402a" points="740,960 830,890 850,950 760,1010"/>
      </g>
      <polygon filter="url(#ridge)" points="320,200 1000,60 1413,40 1413,500 1000,500 860,600 700,430 500,390 320,320"/>
      <polygon class="op5" filter="url(#speck2)" points="0,10 330,10 330,180 220,250 110,350 0,300"/>
      <polygon class="op8" filter="url(#speck2)" points="0,320 400,430 620,620 800,800 800,1010 0,1010"/>
      <polygon class="op8" filter="url(#speck2)" points="880,640 1150,510 1413,780 1413,870 880,880"/>
      <polygon filter="url(#speck)" points="110,740 520,680 790,820 780,1011 40,1011"/>
      <polygon filter="url(#speck)" points="500,490 555,495 570,590 500,560"/>
      <polygon filter="url(#speck)" points="860,900 1100,860 1400,830 1400,860 1150,900 860,985"/>
      <g class="roads">
        <polyline points="180,12 190,170 60,240 50,420"/>
        <polyline points="0,340 130,400 360,410 500,520"/>
        <polyline points="240,40 220,120 330,170"/>
        <polyline points="1020,520 1150,510 1300,700 1413,800"/>
        <polyline points="860,820 1100,800 1280,830"/>
      </g>
      <polygon class="raster" points="715,468 862,632 743,737 590,545"/>
      <g class="burn">
        <polygon class="b-o" points="700,618 712,592 760,572 768,582 735,608 712,628"/>
        <polygon class="b-o2" points="770,600 790,560 815,590 790,605"/>
        <path class="b-r" d="M705 622l25-18M715 596l45-22M730 588l30-8M780 580l12-20"/>
        <path class="b-p" d="M772 604l45-16M800 560l4 32M790 575l20 12"/>
        <path class="b-m" d="M795 555l8 25"/>
      </g>
      <g class="dots">
        <rect x="752" y="660" width="7" height="7"/>
        <rect x="713" y="680" width="5" height="5"/>
        <rect x="740" y="690" width="3" height="4"/>
        <rect x="775" y="670" width="3" height="3"/>
        <rect x="740" y="708" width="3" height="4"/>
      </g>
    </svg>
  </div>
  <footer class="qg-status">
    <span class="st-search"><svg><use href="#gry"/></svg>Type to locate (Ctrl+K)</span>
    <span class="st-msg">Saved project to: C:\Users\user\OneDrive - Politecnico di Milano\GEO4Schools_Fernando\Chapter 4\Copernicus_EMS_Exercise\Chapter-4_Copernicus_EMS_Exercise_Flood_</span>
    <span class="st-l st-co">Coordinate</span><span class="st-in st-c">1629143,4665875</span><svg class="st-i"><use href="#mico"/></svg>
    <span class="st-l st-sc">Scale</span><span class="st-in st-s">1:106884</span><svg class="st-i"><use href="#lck"/></svg>
    <span class="st-l">Magnifier</span><span class="st-in st-m">100%</span>
    <span class="st-l st-r">Rotation</span><span class="st-in st-ro">0,0 °</span>
    <svg class="st-i st-ck"><use href="#chk"/></svg><span class="st-l">Render</span>
    <svg class="st-i st-ep"><use href="#epsg"/></svg><span class="st-l st-e">EPSG:3857</span>
    <svg class="st-i st-bu"><use href="#bub"/></svg>
  </footer>
</section>

<!-- callouts drawn over the screenshots -->
<svg class="arrow" viewBox="0 0 777 770" aria-hidden="true">
  <path d="M169 338H284V169H329" fill="none" stroke="#f00" stroke-width="1.500"/>
  <path d="M329 165.500L335 169L329 172.500z" fill="#f00"/>
</svg>
<div class="badge b1">1</div>
<div class="badge b2">2</div>
<div class="hl hl1"></div>
<div class="hl hl2"></div>
</body>
</html>
```
FILE: styles.css
```css
* { box-sizing: border-box; }
html, body { margin: 0; padding: 0; }
body {
  position: relative;
  width: 777px;
  height: 770px;
  overflow: hidden;
  background: #fff;
  font-family: Roboto, "Liberation Sans", sans-serif;
  color: #222;
}
button { font: inherit; color: inherit; padding: 0; }
label { display: block; white-space: nowrap; }
.defs { position: absolute; }
.grow { flex: 1 1 0; }
.win { position: absolute; }

.s-green { background: #2bbb2e; }
.s-yellow { background: #ffdd00; }
.s-orange { background: #ff9200; }
.s-red { background: #e4003b; }
.s-purple { background: #a000bd; }

/* behind windows */
.peek { position: absolute; }
.peek-top { left: 487px; top: 4px; width: 284px; height: 1px; background: #8a887c; }
.peek-bottom { left: 487px; top: 354px; width: 288px; height: 2px; background: #6b6a60; }
.peek-strip { left: 772px; top: 147px; width: 3px; height: 86px; background: #f2c21c; }

/* Color Presets Ramp */
.dlg { left: 4px; top: 4px; width: 303px; height: 355px; border: 2px solid #f00; filter: blur(.3px); }
.dlg-in { height: 100%; background: #f0f0f0; border: 2px solid #8f8f8f; border-top-width: 1px; }
.dlg-title { height: 21px; background: #fff; display: flex; align-items: center; padding-left: 7px; font-size: 8.500px; color: #333; }
.dlg-logo { width: 11px; height: 11px; margin-right: 4px; }
.dlg-name { flex: 1; }
.dlg-x { width: 15px; font-size: 11px; color: #222; }
.dlg-table { margin: 18px 0 0 17px; width: 261px; height: 176px; background: #fff; border: 1px solid #c6c6c6; border-top-width: 0; }
.dlg-head { height: 15px; display: flex; align-items: center; background: linear-gradient(#fff, #f6f6f6); border-top: 1px solid #c6c6c6; border-bottom: 1px solid #bdbdbd; font-size: 8px; color: #333; }
.dh-color { width: 91px; text-align: center; border-right: 1px solid #ccc; }
.dh-label { padding-left: 1px; }
.dlg-row { height: 32px; display: flex; align-items: center; }
.swatch { width: 31px; height: 31px; margin-left: 29.500px; border-radius: 6px; }
.dlg-text { margin-left: 32px; font-size: 8.800px; color: #333; align-self: stretch; flex: 1; display: flex; align-items: center; }
.dlg-sel { margin-left: 30px; padding-left: 2px; background: #eef6fd; border: 1px solid #cfe6f8; border-right: 0; }
.dlg-tools { margin: 6px 0 0 17px; display: flex; gap: 5.500px; }
.tbtn { width: 20px; height: 20px; background: #f0f0f0; border: 1px solid #bcbcbc; border-radius: 2px; display: flex; align-items: center; justify-content: center; }
.tbtn svg { width: 13.500px; height: 13.500px; opacity: .85; }
.dlg-prev-t { margin: 6px 0 0 18px; height: 11px; font-size: 7.500px; font-weight: 700; color: #333; line-height: 11px; }
.dlg-prev { margin: 3px 0 0 18px; width: 260px; height: 48.500px; border: 1px solid #dcdcdc; padding: 8.500px 19px; }
.ramp { display: flex; }
.ramp i { flex: 1; display: block; }
.ramp-big { height: 30px; }
.dlg-btns { display: flex; gap: 6px; margin: 13px 0 0 101px; }
.dbtn { width: 57.500px; height: 16px; background: #f4f4f4; border: 1px solid #b8b8b8; border-radius: 2px; font-size: 6.500px; color: #333; }
.dbtn-ok { background: #e9f2fa; }

/* Layer Properties */
.lp { left: 335px; top: 8px; width: 436px; height: 346px; background: #f0f0f0; display: flex; flex-direction: column; filter: blur(.4px); font-size: 5.200px; color: #333; }
.lp-title { height: 11px; background: #fff; display: flex; align-items: center; padding-left: 2px; font-size: 5.450px; color: #555; }
.lp-logo { width: 8px; height: 8px; margin-right: 3px; }
.lp-x { margin-left: auto; margin-right: 2px; font-size: 7px; }
.lp-body { flex: 1; display: flex; min-height: 0; }
.lp-side { width: 69px; background: #636363; color: #e0e0e0; font-size: 5.600px; border-left: 1px solid #f0f0f0; }
.lp-search { height: 9px; background: #fff; padding: 1px 0 0 3px; }
.lp-mag { width: 6px; height: 6px; display: block; }
.lp-list { padding-top: 3.500px; }
.lp-item { height: 17.300px; display: flex; align-items: center; padding-left: 2px; gap: 5px; }
.lp-item svg { width: 11px; height: 11px; flex: none; }
.lp-on { background: #f0f0f0; color: #444; }
.lp-main { flex: 1; min-width: 0; display: flex; flex-direction: column; }
.lp-scroll { height: 323px; display: flex; }
.lp-content { width: 358px; padding-left: 3px; }
.gh { height: 11px; display: flex; align-items: center; font-weight: 700; padding-left: 2px; }
.gh2 { height: 10px; margin-top: 2px; }
.tri { width: 0; height: 0; border: 2.200px solid transparent; border-top: 3.200px solid #222; border-bottom: 0; margin-right: 4px; }
.tri-r { width: 0; height: 0; border: 2.200px solid transparent; border-left: 3.200px solid #222; border-right: 0; margin: 0 4px 0 3px; }
.frame { height: 277px; border: 1px solid #dedede; border-width: 1px 0 1px 1px; padding: 5px 8px 0 6px; }
.frame2 { height: 21px; border-bottom: 0; display: flex; align-items: center; padding: 2px 12px 0 5px; }
.row { height: 10px; margin-top: 4px; display: flex; align-items: center; }
.row:first-child { margin-top: 0; }
.row9 { height: 9px; }
.row8 { height: 8px; margin-top: 3px; }
.row-5 { margin-top: 5px; }
.lab-rt { width: 28px; margin-left: -2px; }
.lab-a { width: 86px; }
.lab-b { width: 116px; }
.lab-m { margin: 0 0 0 3px; flex: 0 0 86px; }
.mm { font-size: 5.200px; }
.combo { position: relative; display: flex; align-items: center; height: 100%; padding-left: 2px; background: #f7f7f7; border: 1px solid #c8c8c8; border-radius: 1px; white-space: nowrap; }
.combo::after { content: ""; position: absolute; right: 3px; top: 3px; border: 1.800px solid transparent; border-top: 2.500px solid #444; border-bottom: 0; }
.combo-rt { width: 64px; }
.field { display: flex; align-items: center; height: 100%; padding-left: 2px; background: #fff; border: 1px solid #cfcfcf; }
.clr { width: 6px; height: 6px; margin: 0 2px 0 auto; }
.f-min { width: 83px; }
.f-max { width: 82px; }
.ramp-lp { flex: 1; height: 100%; border: 1px solid #ccc; padding: 1px; }
.rdrop { width: 7px; height: 100%; margin-left: 1px; background: #f6f6f6; border: 1px solid #c8c8c8; position: relative; }
.rdrop::after { content: ""; position: absolute; left: 1px; top: 3px; border: 1.500px solid transparent; border-top: 2px solid #444; border-bottom: 0; }
.spin { width: 7px; height: 100%; margin-left: 0; background: #f4f4f4; border: 1px solid #cfcfcf; position: relative; }
.spin::after { content: ""; position: absolute; left: 1px; top: 1px; border: 1.400px solid transparent; border-bottom: 2px solid #555; border-top: 0; }
.ltable { margin: 4px 0 0 1px; width: 338px; height: 113px; background: #fff; border: 1px solid #d0d0d0; }
.lhead { height: 9.500px; display: flex; align-items: center; background: #f4f4f4; border-bottom: 1px solid #ddd; }
.lrow { height: 19.900px; display: flex; align-items: center; }
.lrow-on { background: #f2f2f2; }
.c1 { width: 57px; padding-left: 1px; border-right: 1px solid #ddd; }
.c1.v { padding-left: 12px; border: 0; }
.c2 { width: 36px; padding-left: 1px; border-right: 1px solid #ddd; }
.lrow .c2 { border: 0; padding-left: 8px; }
.c3 { padding-left: 1px; }
.lrow .c3 { padding-left: 1px; font-size: 5.200px; }
.lsw { display: block; width: 19px; height: 19px; border-radius: 3.500px; }
.row-mode { margin-top: 4px; }
.lab-mode { width: 15px; padding-left: 1px; }
.combo-mode { width: 42px; }
.lab-cls { width: 17px; }
.f-cls { width: 28px; background: #efefef; color: #888; }
.row-cl { height: 12px; gap: 3.500px; }
.cbtn { width: 36px; height: 9px; margin: 0 0 0 1px; background: #f7f7f7; border: 1px solid #c8c8c8; border-radius: 1px; font-size: 5.200px; }
.ib { width: 15px; height: 12px; background: #f4f4f4; border: 1px solid #c8c8c8; border-radius: 1px; display: flex; align-items: center; justify-content: center; }
.ib svg { width: 9px; height: 9px; }
.row-clip { height: 7px; }
.fake-chk { width: 7px; height: 7px; margin-left: 1px; border: 1px solid #ccc; background: #eee; margin-right: 4px; }
.dim { color: #9a9a9a; }
.lab-bm { width: 34px; }
.combo-bm { width: 148px; height: 9px; }
.rst { width: 27px; height: 12px; display: flex; align-items: center; justify-content: center; gap: 2px; background: #f7f7f7; border: 1px solid #c8c8c8; font-size: 5px; }
.rst svg { width: 7px; height: 7px; }
.lp-sb { width: 8px; margin-left: 1px; display: flex; flex-direction: column; background: #f0f0f0; border: 1px solid #d0d0d0; border-width: 0 1px; }
.lp-sb .up, .lp-sb .dn { height: 6px; background: #f4f4f4; position: relative; }
.lp-sb .up { margin-top: 1px; }
.lp-sb .thumb { height: 233px; background: #fff; border-bottom: 1px solid #ccc; }
.lp-sb .dn { margin-top: auto; }
.lp-foot { height: 12px; display: flex; gap: 3.500px; align-items: flex-end; padding: 0 0 3px 2px; }
.fb { width: 36px; height: 8.500px; background: #f4f4f4; border: 1px solid #c8c8c8; border-radius: 1px; font-size: 5px; }
.fb-style { position: relative; }
.fb-style i { position: absolute; right: 3px; top: 2.500px; border: 1.800px solid transparent; border-top: 2.500px solid #444; border-bottom: 0; }
.fb-ok { background: #e9f2fa; }

/* QGIS */
.qg { left: 28px; top: 360px; width: 721px; height: 410px; background: #f0f0f0; display: flex; flex-direction: column; filter: blur(.4px); font-size: 4.600px; color: #333; }
.qg-title { height: 12px; background: #fff; display: flex; align-items: center; padding-left: 1px; font-size: 5.100px; color: #555; }
.qg-logo { width: 7px; height: 7px; margin-right: 1px; }
.ctl { width: 17px; font-size: 5.500px; text-align: center; color: #666; }
.qg-menu { height: 8px; display: flex; align-items: center; gap: 5.300px; padding-left: 3px; font-size: 5px; color: #444; }
.tb { display: flex; align-items: center; border-top: 1px solid #d4d4d4; background: #f2f2f2; }
.tb > svg { width: 10px; height: 10px; margin: 0 1.250px; flex: none; }
.tb b { display: block; flex: none; }
.tb1 { padding-left: 3.750px; height: 13px; }
.tb2 { padding-left: 5.750px; height: 14.500px; }
.tb3 { padding-left: 4.750px; height: 15px; }
.fd { opacity: .35; }
.car { width: 4px; height: 0; border: 1.500px solid transparent; border-top: 2px solid #555; border-bottom: 0; border-left-width: .500px; border-right-width: .500px; }
.car.c6 { width: 6px; border-left-width: 1.500px; border-right-width: 1.500px; }
.s1 { width: 1.500px; } .s2 { width: 2px; } .s3 { width: 3px; } .s4 { width: 4px; } .s5 { width: 5.500px; } .s6 { width: 6.500px; } .s7 { width: 7px; } .s8 { width: 8px; } .s11 { width: 11.500px; }
.dk { height: 8px; display: flex; align-items: center; justify-content: center; flex: none; overflow: hidden; background: #5a5a5a; color: #ddd; font-size: 3.800px; white-space: nowrap; }
.inp { height: 8px; display: flex; align-items: center; flex: none; padding-left: 1px; background: #fff; border: 1px solid #d4d4d4; font-size: 3.800px; position: relative; }
.inp::after { content: ""; position: absolute; right: 0; top: 0; bottom: 0; width: 4px; background: #efefef; border-left: 1px solid #d4d4d4; }
.w4 { width: 4px; } .w6 { width: 6px; } .w7 { width: 7px; } .w16 { width: 16px; } .w20 { width: 20px; } .w22 { width: 22px; } .w23 { width: 23px; } .w24 { width: 24px; } .w25 { width: 25px; } .w29 { width: 29px; } .w36 { width: 36px; }
.m1 { margin-left: 1px; } .m2 { margin-left: 2px !important; } .m3 { margin-left: 3px; }
.qg-work { height: 333px; margin-top: .500px; display: flex; }
.qg-left { width: 250px; display: flex; flex-direction: column; }
.map { width: 471px; height: 333px; flex: none; display: block; background: #4f5443; }
.op5 { opacity: .5; }
.op8 { opacity: .8; }
.roads polyline { fill: none; stroke: #b09c88; stroke-width: 2; opacity: .3; }
.raster { fill: #ffdd00; }
.b-o { fill: #ff9a1e; }
.b-o2 { fill: #ffb02a; }
.b-r { fill: none; stroke: #e4003b; stroke-width: 4; stroke-dasharray: 7 9; }
.b-p { fill: none; stroke: #a000bd; stroke-width: 6; stroke-dasharray: 9 2; }
.b-m { fill: none; stroke: #e4003b; stroke-width: 5; }
.dots rect { fill: #2bbb2e; }
.ph { height: 9px; display: flex; align-items: center; justify-content: space-between; padding: 0 4px 0 1px; color: #555; }
.ph-c { font-size: 4.500px; color: #777; }
.ph2 { height: 10px; margin-top: 3px; }
.pt { height: 9.500px; display: flex; align-items: center; gap: 2.500px; padding-left: 5px; }
.pt svg { width: 6.500px; height: 6.500px; }
.pt2 { gap: 3px; padding-left: 2px; }
.tree { width: 245px; background: #fff; position: relative; }
.tree-b { height: 133px; padding-top: .500px; border: 1px solid #e2e2e2; }
.tree-l { flex: 1; padding-top: .500px; border: 1px solid #e2e2e2; border-bottom: 0; }
.tr, .ly { height: 8.300px; display: flex; align-items: center; white-space: nowrap; }
.tr svg { width: 7.500px; height: 7.500px; margin-right: 1.700px; flex: none; }
.tr .ar, .ly .ar { width: 7px; flex: none; height: 3px; position: relative; }
.ar.dn::after { content: ""; position: absolute; left: 1.500px; top: 0; border: 1.500px solid transparent; border-top: 2.200px solid #444; border-bottom: 0; }
.ar.rt::after { content: ""; position: absolute; left: 2px; top: 0; border: 1.500px solid transparent; border-left: 2.200px solid #444; border-right: 0; }
.d0 { padding-left: 28.500px; } .d1 { padding-left: 37.800px; } .d2 { padding-left: 47.100px; } .d3 { padding-left: 56.400px; } .d4 { padding-left: 65.700px; } .d5 { padding-left: 75px; }
.tr-on { background: #f2f2f2; width: 187px; }
.sb { position: absolute; right: 0; top: 0; bottom: 0; width: 6px; background: #f0f0f0; border-left: 1px solid #e2e2e2; }
.thumb-b { display: block; margin-top: 56px; height: 22px; background: #fff; border: 1px solid #ddd; border-width: 1px 0; }
.ly { padding-left: 1px; font-size: 4.950px; color: #444; }
.ly .ck { width: 6px; height: 6px; margin: 0 0 0 3px; flex: none; }
.ly svg:not(.ck) { width: 7px; height: 7px; margin: 0 2.500px 0 3px; flex: none; }
.l2 { padding-left: 10.500px; }
.off { font-style: italic; color: #777; }
.ly-on { border: 1px solid #cfe6f8; background: #f5fafe; margin-left: -1px; }
.ly strong { font-weight: 700; }
.brown { width: 7px; height: 7px; margin: 0 2.500px 0 3px; background: #a8714f; flex: none; }
.qg-status { height: 12px; display: flex; align-items: center; padding-left: 2px; font-size: 4.200px; color: #444; background: #f0f0f0; white-space: nowrap; border-bottom: 1px solid #777; }
.st-search { width: 86px; height: 8px; display: flex; align-items: center; gap: 2px; background: #fff; border: 1px solid #ddd; color: #999; padding-left: 2px; font-size: 4.200px; flex: none; }
.st-search svg { width: 5px; height: 5px; }
.st-msg { width: 310px; margin-left: 3px; flex: none; font-size: 4.020px; }
.st-l { flex: none; margin-left: 3px; }
.st-in { flex: none; height: 8px; display: flex; align-items: center; padding-left: 2px; margin-left: 2px; background: #fff; border: 1px solid #ddd; font-size: 4px; }
.st-c { width: 37px; }
.st-s { width: 35px; }
.st-m { width: 32px; }
.st-ro { width: 26px; }
.st-i { width: 7px; height: 7px; margin-left: 3px; flex: none; }
.st-co { margin-left: 3px; }
.st-sc { margin-left: 4px; }
.st-r { margin-left: 6px; }
.st-ck { margin-left: 8px; width: 5.500px; height: 5.500px; }
.st-ep { margin-left: 6px; }
.st-bu { margin-left: 8px; }

/* overlays */
.arrow { position: absolute; left: 0; top: 0; width: 777px; height: 770px; pointer-events: none; }
.badge { position: absolute; width: 28px; height: 28px; border-radius: 50%; background: #f00; color: #fff; display: flex; align-items: center; justify-content: center; font: 700 14px "Liberation Sans", sans-serif; }
.b1 { left: 75px; top: 321px; }
.b2 { left: 622px; top: 309px; }
.hl { position: absolute; border: 2px solid #e00000; }
.hl1 { left: 108px; top: 329px; width: 60px; height: 18px; }
.hl2 { left: 615px; top: 340px; width: 40px; height: 12px; }
```
